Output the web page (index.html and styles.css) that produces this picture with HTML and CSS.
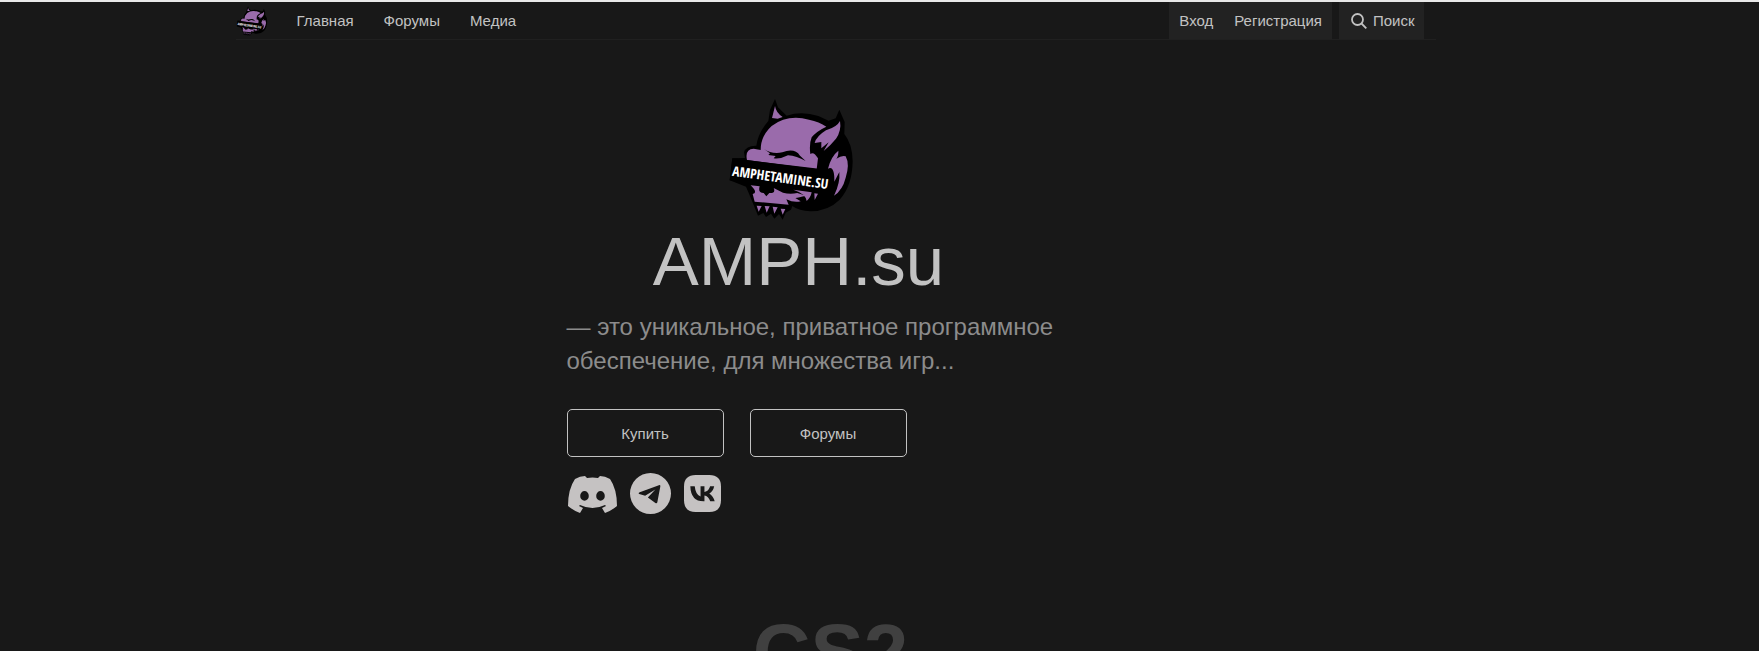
FILE: index.html
```html
<!DOCTYPE html>
<html lang="ru">
<head>
  <meta charset="UTF-8">
  <meta name="viewport" content="width=device-width, initial-scale=1">
  <title>AMPH.su</title>
  <link rel="stylesheet" href="styles.css">
</head>
<body>
  <header class="header">
    <nav class="nav">
      <a class="nav-logo" href="#">
        <svg viewBox="40 22 376 366" role="img" aria-label="AMPH.su"><use href="#skull"/></svg>
      </a>
      <a href="#">Главная</a>
      <a href="#">Форумы</a>
      <a href="#">Медиа</a>
    </nav>
    <div class="account">
      <a href="#">Вход</a>
      <a href="#">Регистрация</a>
    </div>
    <button class="search" type="button">
      <svg viewBox="0 0 16 16" fill="none" stroke="currentColor" stroke-width="1.8" aria-hidden="true">
        <circle cx="6.5" cy="6.5" r="5.5"/>
        <path d="M10.5 10.5L15.3 15.3"/>
      </svg>
      Поиск
    </button>
  </header>

  <main>
    <section class="hero">
      <div class="hero-title">
        <svg class="hero-logo" viewBox="40 22 376 366" aria-hidden="true">
          <g id="skull">
            <!-- outline with horns -->
            <path d="M160 91L165 58L180 25L189 50L215 75Q260 60 310 76L341 90L362 83L373 57L389 94L388 130Q412 160 413 211Q412 285 374 327Q340 361 286 362Q252 361 232 346L228 357L212 366L203 387L192 370L178 384L168 369L153 379L145 367L129 375L116 343L102 309L93 288L44 269L52 203L90 202L87 185Q93 164 124 165Q130 125 160 91Z" fill="#000"/>
            <!-- head -->
            <path d="M96 208Q89 175 116 174L137 178Q137 136 170 106Q218 70 282 87Q313 93 334 108Q304 122 290 140Q282 160 286 190Q296 181 309 203L305 236Z" fill="#9a6bab"/>
            <path d="M171 82L180 46Q183 66 203 79L188 84Z" fill="#9a6bab"/>
            <path d="M299 157Q304 137 333 119Q366 109 375 91Q380 120 363 144Q347 164 326 181L341 155L319 173L319 154Z" fill="#9a6bab"/>
            <path d="M339 234Q348 197 370 180Q371 196 364 204Q381 193 392 197Q405 221 392 261Q383 298 357 315Q376 277 373 244L358 273Q359 224 339 234Z" fill="#9a6bab"/>
            <!-- jaw -->
            <path d="M107 284L134 287Q128 307 146 307L154 317L163 307Q183 308 176 292L204 306Q225 312 247 307L273 315Q251 320 241 322L257 332Q237 337 214 326L221 342L119 333L113 310Q130 307 107 284Z" fill="#9a6bab"/>
            <path d="M125 345L140 346L131 363ZM149 346L164 347L155 366ZM173 348L188 350L178 369ZM197 354L211 355L203 372Z" fill="#9a6bab"/>
            <path d="M235 297L290 305Q287 321 275 331Q272 309 235 297ZM298 308L309 309L299 328Z" fill="#9a6bab"/>
            <!-- closed eye -->
            <path d="M147 175Q170 191 202 185Q239 171 255 195L272 211Q245 196 219 194Q196 206 176 203L182 196L160 193L165 188Z" fill="#000"/>
            <path d="M52 203L350 239L341 309L44 269Z" fill="#000"/>
            <text class="skull-text" x="50" y="255" transform="rotate(8 50 255)">AMPHETAMINE.SU</text>
          </g>
        </svg>
        <h1>AMPH.su</h1>
      </div>
      <p class="lead">— это уникальное, приватное программное обеспечение, для множества игр...</p>
      <div class="buttons">
        <button type="button">Купить</button>
        <button type="button">Форумы</button>
      </div>
      <div class="socials">
        <a href="#" aria-label="Discord">
          <svg class="discord" viewBox="0 0 49 38">
            <path d="M17 1L19 3Q24.500 2 30 3L32 1Q37 1 42 4Q49 14 49 31Q43 36 37 38L34 33L38 31L37 30Q24.500 36 12 30L11 31L15 33L12 38Q6 36 0 31Q0 14 7 4Q12 1 17 1ZM16.500 16A4.300 4.900 0 1 0 16.500 25.800A4.300 4.900 0 1 0 16.500 16ZM32.500 16A4.300 4.900 0 1 0 32.500 25.800A4.300 4.900 0 1 0 32.500 16Z" fill-rule="evenodd"/>
          </svg>
        </a>
        <a href="#" aria-label="Telegram">
          <svg class="telegram" viewBox="0 0 42 42">
            <path d="M21 0A21 21 0 1 0 21 42A21 21 0 1 0 21 0ZM30.300 12.300Q31.300 12.200 31 14L28 30Q27.600 31.500 26 30.700L18.300 25L26 17L15.500 23.400L9.500 21.600Q8 20.800 10 19.800Z" fill-rule="evenodd"/>
          </svg>
        </a>
        <a href="#" aria-label="VK">
          <svg class="vk" viewBox="0 0 38 38">
            <path d="M12 0H26Q38 0 38 12V26Q38 38 26 38H12Q0 38 0 26V12Q0 0 12 0ZM6.500 11.500Q7 27 20 27H21V21Q25 21.500 27 27H31.500Q30 21.500 26 19Q30 16.500 31 11.500H26.800Q25.500 16.500 21 17.500V11.500H17V22Q12 20.500 11 11.500Z" fill-rule="evenodd"/>
          </svg>
        </a>
      </div>
    </section>

    <section class="games">
      <h2>CS2</h2>
    </section>
  </main>
</body>
</html>
```
FILE: styles.css
```css
* {
  box-sizing: border-box;
}
body {
  margin: 0;
  padding-right: 88px;
  background: #181818;
  color: #c2c2c2;
  border-top: 2px solid #e8e8e8;
  font-family: "Liberation Sans", Arial, sans-serif;
  font-size: 15px;
}
a {
  color: inherit;
  text-decoration: none;
}
button {
  font: inherit;
  color: inherit;
  cursor: pointer;
}
svg {
  display: block;
}
.header,
main {
  max-width: 1200px;
  margin: 0 auto;
}
.header {
  display: flex;
  height: 38px;
  padding-right: 12px;
  border-bottom: 1px solid #202020;
}
.nav {
  display: flex;
  align-items: center;
  gap: 30px;
  margin-right: auto;
}
.nav-logo {
  width: 31px;
}
.nav-logo svg {
  width: 32px;
  height: 30px;
}
.account,
.search {
  display: flex;
  align-items: center;
  background: #222;
}
.account {
  gap: 21px;
  padding: 0 10px;
  margin-right: 7px;
}
.search {
  gap: 6px;
  padding: 0 9px 0 12px;
  border: none;
}
.search svg {
  width: 16px;
  height: 16px;
}
.hero {
  max-width: 538px;
  margin: 0 auto;
  padding-top: 58px;
}
.hero-title {
  display: flex;
  flex-direction: column;
  align-items: center;
  max-width: 464px;
}
.hero-logo {
  width: 126px;
  height: 122px;
  margin-right: 16px;
}
.skull-text {
  fill: #fff;
  font-family: "Open Sans Condensed", Lato, sans-serif;
  font-size: 41px;
}
h1 {
  margin: 0;
  font-size: 69px;
  font-weight: 400;
  line-height: 84px;
}
.lead {
  margin: 6px 0 31px;
  color: #8c8c8c;
  font-size: 24px;
  line-height: 34px;
}
.buttons {
  display: flex;
  gap: 26px;
}
.buttons button {
  width: 157px;
  height: 48px;
  background: none;
  border: 1px solid #c2c2c2;
  border-radius: 5px;
}
.socials {
  display: flex;
  align-items: center;
  gap: 13px;
  padding: 16px 1px;
}
.socials svg {
  fill: #c5c2c2;
}
.discord {
  width: 49px;
  height: 38px;
}
.telegram {
  width: 41px;
  height: 41px;
}
.vk {
  width: 37px;
  height: 37px;
}
.games {
  padding: 79px 10px 0 0;
}
h2 {
  margin: 0;
  color: #404040;
  font-size: 80px;
  line-height: 88px;
  text-align: center;
}
```
